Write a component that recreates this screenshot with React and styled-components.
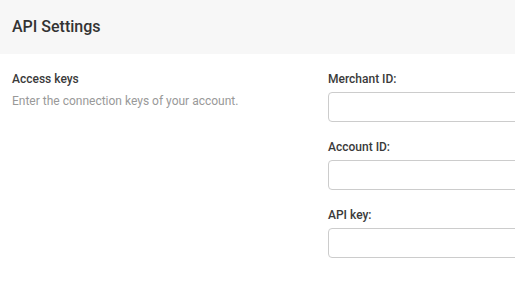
import React from 'react';
import styled, { createGlobalStyle } from 'styled-components';

const GlobalStyle = createGlobalStyle`
  body {
    margin: 0;
    background: #fff;
    font-family: Roboto, "Liberation Sans", Arial, sans-serif;
    overflow: hidden;
  }
`;

const Page = styled.div`
  width: 515px;
  height: 287px;
  overflow: hidden;
`;

const Header = styled.div`
  height: 54px;
  background: #f7f7f7;
  display: flex;
  align-items: center;
  padding: 0 12px;
  box-sizing: border-box;
`;

const Title = styled.h1`
  margin: 0;
  font-size: 16px;
  font-weight: 500;
  color: #333;
  padding-bottom: 2px;
`;

const Body = styled.div`
  display: grid;
  grid-template-columns: 316px 200px;
  padding: 18px 0 0 12px;
`;

const Section = styled.div`
  display: flex;
  flex-direction: column;
  gap: 8px;
`;

const SectionTitle = styled.div`
  font-size: 12px;
  font-weight: 500;
  color: #3a3a3a;
  line-height: 14px;
`;

const SectionText = styled.div`
  font-size: 12px;
  color: #999;
  line-height: 14px;
`;

const Fields = styled.div`
  display: flex;
  flex-direction: column;
  gap: 18px;
`;

const Field = styled.div`
  display: flex;
  flex-direction: column;
  gap: 6px;
`;

const Label = styled.label`
  font-size: 12px;
  font-weight: 500;
  color: #3a3a3a;
  line-height: 14px;
`;

const Input = styled.input`
  width: 220px;
  height: 30px;
  box-sizing: border-box;
  border: 1px solid #ccc;
  border-radius: 4px;
  padding: 0 8px;
  font: inherit;
  outline: none;
`;

const fields = ['Merchant ID:', 'Account ID:', 'API key:'];

export default function App() {
  return (
    <Page>
      <GlobalStyle />
      <Header>
        <Title>API Settings</Title>
      </Header>
      <Body>
        <Section>
          <SectionTitle>Access keys</SectionTitle>
          <SectionText>Enter the connection keys of your account.</SectionText>
        </Section>
        <Fields>
          {fields.map((f) => (
            <Field key={f}>
              <Label>{f}</Label>
              <Input type="text" />
            </Field>
          ))}
        </Fields>
      </Body>
    </Page>
  );
}
